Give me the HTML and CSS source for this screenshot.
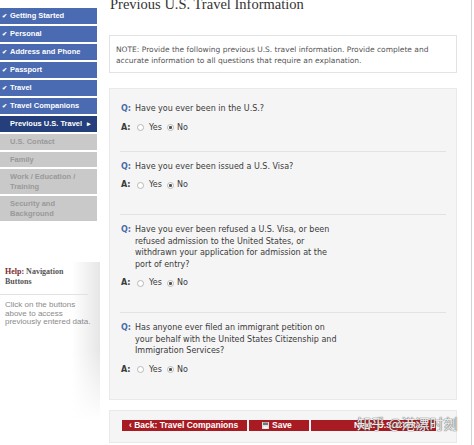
FILE: index.html
```html
<!DOCTYPE html>
<html lang="en">
<head>
	<meta charset="UTF-8">
	<title>Previous U.S. Travel Information</title>
	<link rel="stylesheet" href="styles.css">
</head>
<body>
	<div id="page">
		<div id="side">
			<ul id="steps">
				<li><span class="tick">&#10004;</span>Getting Started</li>
				<li><span class="tick">&#10004;</span>Personal</li>
				<li><span class="tick">&#10004;</span>Address and Phone</li>
				<li><span class="tick">&#10004;</span>Passport</li>
				<li><span class="tick">&#10004;</span>Travel</li>
				<li><span class="tick">&#10004;</span>Travel Companions</li>
				<li class="cur">Previous U.S. Travel <span class="caret">&#9656;</span></li>
				<li class="todo">U.S. Contact</li>
				<li class="todo">Family</li>
				<li class="todo">Work / Education / Training</li>
				<li class="todo">Security and Background</li>
			</ul>
			<div id="help">
				<h3><span class="red">Help:</span> Navigation Buttons</h3>
				<p>Click on the buttons above to access previously entered data.</p>
			</div>
		</div>
		<div id="main">
			<h1>Previous U.S. Travel Information</h1>
			<div class="note">NOTE: Provide the following previous U.S. travel information. Provide complete and accurate information to all questions that require an explanation.</div>
			<div class="qbox">
				<div class="qa">
					<div class="q"><b>Q:</b><span>Have you ever been in the U.S.?</span></div>
					<div class="a"><b>A:</b><i class="radio"></i>Yes<i class="radio on"></i>No</div>
				</div>
				<div class="qa">
					<div class="q"><b>Q:</b><span>Have you ever been issued a U.S. Visa?</span></div>
					<div class="a"><b>A:</b><i class="radio"></i>Yes<i class="radio on"></i>No</div>
				</div>
				<div class="qa">
					<div class="q"><b>Q:</b><span>Have you ever been refused a U.S. Visa, or been refused admission to the United States, or withdrawn your application for admission at the port of entry?</span></div>
					<div class="a"><b>A:</b><i class="radio"></i>Yes<i class="radio on"></i>No</div>
				</div>
				<div class="qa">
					<div class="q"><b>Q:</b><span>Has anyone ever filed an immigrant petition on your behalf with the United States Citizenship and Immigration Services?</span></div>
					<div class="a"><b>A:</b><i class="radio"></i>Yes<i class="radio on"></i>No</div>
				</div>
			</div>
			<div class="btnbar">
				<a href="#" class="btn back">&lsaquo; Back: Travel Companions</a>
				<a href="#" class="btn save"><svg width="7" height="7" viewBox="0 0 7 7"><rect x="0" y="0" width="7" height="7" fill="#ddd"/><rect x="1" y="0.5" width="5" height="2.5" fill="#777"/><rect x="1.5" y="4.5" width="4" height="2" fill="#fff"/></svg> Save</a>
				<a href="#" class="btn next">Next: U.S. Contact &rsaquo;</a>
			</div>
		</div>
	</div>
	<div id="mark">知乎 @港漂时刻</div>
</body>
</html>
```

FILE: styles.css
```css
*{
	margin: 0;
	padding: 0;
	text-decoration: none;
}
body{
	background: #fff;
	font-family: "DejaVu Sans", Verdana, sans-serif;
	font-size: 8px;
	color: #3a3a3a;
	overflow: hidden;
}
#page{
	display: flex;
	align-items: flex-start;
	width: 472px;
}
#side{
	flex: none;
	width: 100px;
	padding-top: 8px;
}
#steps{
	list-style: none;
	width: 97px;
}
#steps li{
	font-family: "Liberation Sans", Arial, sans-serif;
	font-weight: bold;
	font-size: 7.5px;
	line-height: 10px;
	padding: 3px 4px 3px 10px;
	margin-bottom: 2px;
	color: #fff;
	background: #4a6ab1;
}
#steps .cur{
	display: flex;
	justify-content: space-between;
	background: #243f7b;
}
#steps .todo{
	background: #c9c9c9;
	color: #999;
	line-height: 9.5px;
}
.tick{
	display: inline-block;
	width: 8px;
	margin-left: -8px;
	font-size: 6px;
}
.caret{
	font-size: 7px;
	margin-right: 2px;
}
#help{
	margin-top: 41px;
	height: 160px;
	background: linear-gradient(to bottom, rgba(255,255,255,0) 55%, #fff 100%), linear-gradient(to right, #fff 72%, #e6e6e6 100%);
}
#help h3{
	font-family: "Liberation Serif", "Times New Roman", serif;
	font-size: 8px;
	line-height: 10px;
	color: #555;
	padding: 5px 10px 7px 5px;
	margin-right: 12px;
	border-bottom: 1px solid #e2e2e2;
}
#help .red{
	color: #7b2b2b;
}
#help p{
	font-family: "Liberation Sans", Arial, sans-serif;
	font-size: 8px;
	line-height: 8.5px;
	color: #8a8a8a;
	padding: 6px 6px 0 5px;
}
#main{
	flex: 1;
	min-height: 445px;
	padding: 0 14px 0 9px;
	border-right: 1px solid #d3d3d3;
}
h1{
	font-family: "Liberation Serif", "Times New Roman", serif;
	font-weight: normal;
	font-size: 14.5px;
	line-height: 14px;
	margin-top: -3px;
	padding-left: 1px;
	color: #333;
}
.note{
	margin-top: 24px;
	border: 1px solid #e3e3e3;
	background: #fff;
	padding: 8px 6px 6px;
	font-size: 7.5px;
	line-height: 11px;
	color: #555;
}
.qbox{
	margin-top: 15px;
	background: #f5f5f5;
	border: 1px solid #e9e9e9;
	padding: 4px 10px 0;
}
.qa{
	padding: 9px 0 23px 1px;
	border-top: 1px solid #e2e2e2;
}
.qa:first-child{
	border-top: 0;
	padding-top: 10px;
	padding-bottom: 17px;
}
.q{
	display: flex;
	line-height: 11.5px;
}
.q b{
	flex: none;
	width: 14px;
	color: #4a6aa8;
}
.q span{
	width: 205px;
}
.a{
	display: flex;
	align-items: center;
	margin-top: 7px;
	line-height: 12px;
}
.a b{
	width: 16px;
}
.radio{
	width: 5px;
	height: 5px;
	border-radius: 50%;
	border: 1px solid #b8b8b8;
	background: #fff;
	margin-right: 5px;
}
.radio.on{
	margin-left: 5px;
	margin-right: 3px;
	background: radial-gradient(circle, #555 1.3px, #fff 1.8px);
}
.btnbar{
	display: flex;
	gap: 2px;
	margin-top: 10px;
	background: #f5f5f5;
	border: 1px solid #e9e9e9;
	padding: 9px 0 11px 12px;
}
.btn{
	display: flex;
	align-items: center;
	gap: 3px;
	height: 11px;
	background: #a81b22;
	color: #fff;
	font-family: "Liberation Sans", Arial, sans-serif;
	font-weight: bold;
	font-size: 8.5px;
}
.back{
	width: 118px;
	padding-left: 7px;
}
.save{
	width: 47px;
	padding-left: 13px;
}
.next{
	width: 82px;
	padding-left: 43px;
}
#mark{
	position: absolute;
	left: 357px;
	top: 414px;
	font-family: "Noto Sans CJK SC", sans-serif;
	font-size: 14px;
	line-height: 18px;
	color: rgba(255,255,255,0.9);
	text-shadow: 0 0 1px #555, 0 0 1px #555;
}
```
